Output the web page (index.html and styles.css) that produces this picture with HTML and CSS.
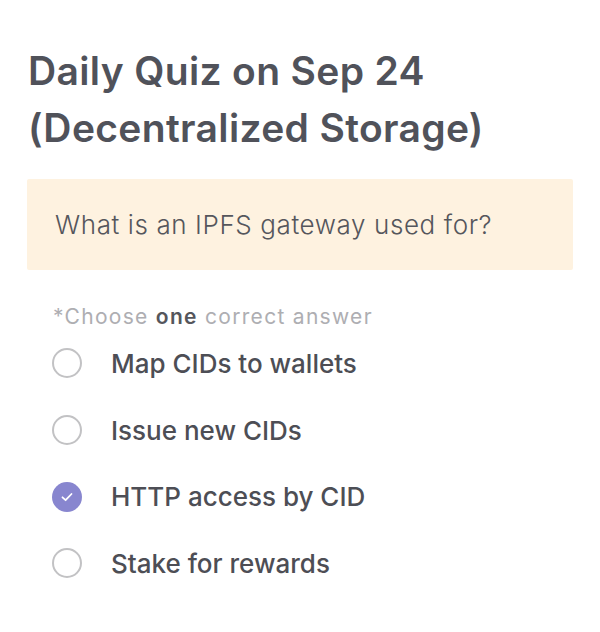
FILE: index.html
```html
<!DOCTYPE html>
<html>
<head>
<meta charset="utf-8">
<link rel="stylesheet" href="styles.css">
</head>
<body>
<div class="quiz">
  <h1 class="title">Daily Quiz on Sep 24 (Decentralized Storage)</h1>
  <div class="question">What is an IPFS gateway used for?</div>
  <div class="hint">*Choose <b>one</b> correct answer</div>
  <ul class="options">
    <li class="option"><span class="radio"></span><span class="label">Map CIDs to wallets</span></li>
    <li class="option"><span class="radio"></span><span class="label">Issue new CIDs</span></li>
    <li class="option"><span class="radio checked"><svg width="16" height="16" viewBox="0 0 16 16"><path d="M3.5 8.3 L6.6 11.2 L12.5 5" fill="none" stroke="#fff" stroke-width="1.8" stroke-linecap="round" stroke-linejoin="round"/></svg></span><span class="label">HTTP access by CID</span></li>
    <li class="option"><span class="radio"></span><span class="label">Stake for rewards</span></li>
  </ul>
</div>
</body>
</html>
```
FILE: styles.css
```css
html, body {
  margin: 0;
  padding: 0;
  background: #ffffff;
}
body {
  font-family: Inter, "Noto Sans", sans-serif;
}
.quiz {
  padding: 42px 27px 0 27px;
}
.title {
  margin: 0 0 0 1px;
  font-size: 39px;
  line-height: 57px;
  font-weight: 600;
  color: #50525a;
  letter-spacing: 0.35px;
  width: 500px;
}
.question {
  margin-top: 23px;
  background: #fef2e0;
  height: 91px;
  display: flex;
  align-items: center;
  padding-left: 28px;
  font-size: 26px;
  font-weight: 300;
  color: #55565c;
  letter-spacing: 0.6px;
  border-radius: 2px;
}
.hint {
  margin: 35px 0 0 26px;
  font-size: 21px;
  line-height: 24px;
  letter-spacing: 1.3px;
  color: #aeaeb2;
}
.hint b {
  color: #55565c;
  font-weight: 600;
}
.options {
  list-style: none;
  margin: 1px 0 0 25px;
  padding: 0;
}
.option {
  display: flex;
  align-items: center;
  height: 66.7px;
}
.radio {
  box-sizing: border-box;
  width: 30px;
  height: 30px;
  border-radius: 50%;
  border: 2px solid #c2c2c4;
  display: flex;
  align-items: center;
  justify-content: center;
  flex-shrink: 0;
}
.radio.checked {
  border: none;
  background: #8886cf;
}
.label {
  margin-left: 29px;
  font-size: 26px;
  font-weight: 500;
  color: #4d4e55;
}
```
